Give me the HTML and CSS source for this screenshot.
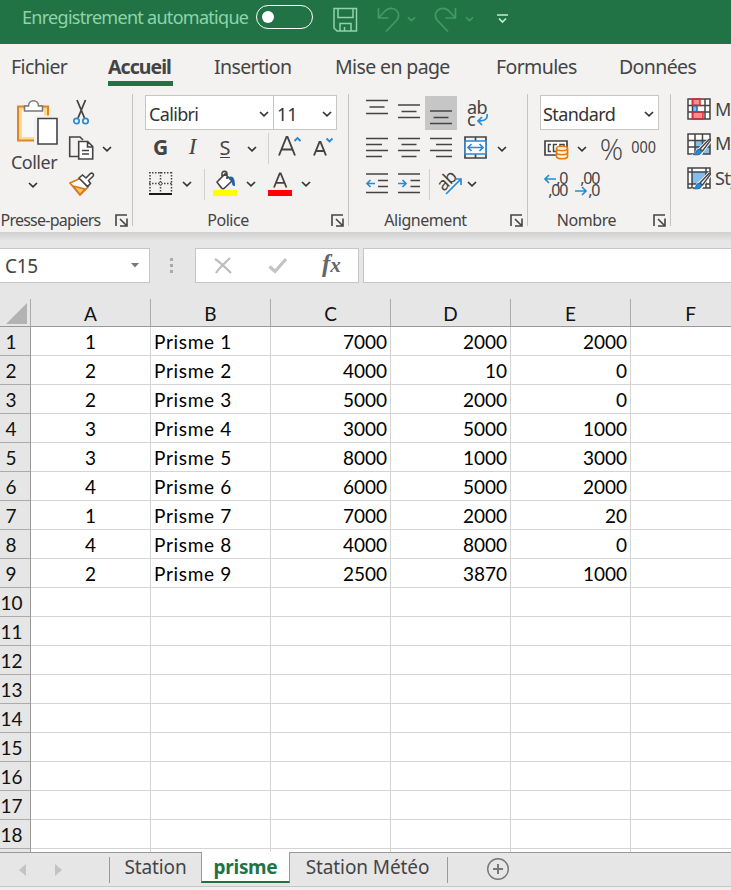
FILE: index.html
```html
<!doctype html>
<html lang="fr">
<head>
	<meta charset="utf-8">
	<title>Classeur</title>
	<link rel="stylesheet" href="styles.css">
</head>
<body>
<svg class="defs">
	<symbol id="chev" viewBox="0 0 10 6"><path d="M1 1l4 3.800L9 1" fill="none" stroke="currentColor" stroke-width="1.700"/></symbol>
	<symbol id="launch" viewBox="0 0 13 13"><path d="M1 12V1h11M5 5l6 6M12 4.500v7.500H5" fill="none" stroke="currentColor" stroke-width="1.600"/></symbol>
</svg>
<div class="wrap">
	<!--barre de titre-->
	<div class="titlebar">
		<span class="autosave">Enregistrement automatique</span>
		<span class="toggle"><i></i></span>
		<svg class="save" width="26" height="26" viewBox="0 0 26 26"><path d="M2 1.500h22.500v22.500H5l-3-3zM6 1.500v9h15v-9M8 24v-7.500h11V24M12.500 24v-4" fill="none" stroke="#8fd3ab" stroke-width="1.500"/></svg>
		<svg class="undo" width="24" height="26" viewBox="0 0 24 26"><path d="M1.500 1v10h10M1.500 11l6-6.500C11 .5 17 .5 20 4c2.500 3 2 7-.5 9.500L9 24.500" fill="none" stroke="#429a66" stroke-width="1.700"/></svg>
		<svg class="undo-chev" width="9" height="6"><use href="#chev"/></svg>
		<svg class="redo" width="24" height="26" viewBox="0 0 24 26"><path d="M22.500 1v10h-10M22.500 11l-6-6.500C13 .5 7 .5 4 4c-2.500 3-2 7 .5 9.500L15 24.500" fill="none" stroke="#429a66" stroke-width="1.700"/></svg>
		<svg class="redo-chev" width="9" height="6"><use href="#chev"/></svg>
		<svg class="more" width="12" height="12" viewBox="0 0 12 12"><path d="M0 2h11M2 5.500l3.500 3.500L9 5.500" fill="none" stroke="#c0efd2" stroke-width="1.700"/></svg>
	</div>
	<!--onglets-->
	<div class="tabs">
		<span>Fichier</span><span class="on"><b>Accueil</b></span><span>Insertion</span><span>Mise en page</span><span>Formules</span><span>Données</span>
	</div>
	<!--ruban-->
	<div class="ribbon">
		<div class="group clip">
			<div class="cols">
				<div class="paste">
					<svg width="66" height="56" viewBox="0 0 66 56">
						<path d="M18 11.500h30v34H18z" fill="#ffd98f" stroke="#e0842a" stroke-width="2"/>
						<path d="M22 15h22v27H22z" fill="#f8f8f7"/>
						<path d="M24.500 16v-5h4c0-7 10-7 10 0h4v5z" fill="#fff" stroke="#777" stroke-width="1.500"/>
						<path d="M35.500 22V49.800H50V22z" fill="#f3f2f1" stroke="#f3f2f1" stroke-width="3"/>
						<path d="M38 23.500h19v25.500H38z" fill="#fff" stroke="#444" stroke-width="1.600"/>
					</svg>
					<span>Coller</span>
					<svg class="chev" width="10" height="6"><use href="#chev"/></svg>
				</div>
				<div class="tools">
					<svg width="60" height="36" viewBox="0 0 60 36">
						<path d="M11 5l7.500 18M19.500 5l-7.500 18" fill="none" stroke="#444" stroke-width="1.800"/>
						<g fill="#f3f2f1" stroke="#2a8ad4" stroke-width="1.700"><circle cx="10.500" cy="26" r="2.700"/><circle cx="19.500" cy="26" r="2.700"/></g>
					</svg>
					<svg width="60" height="35" viewBox="0 0 60 35">
						<path d="M12 25.500H3.700V6H14l3 3" fill="none" stroke="#444" stroke-width="1.600"/>
						<path d="M12.700 10.500h9l5 5v12.500h-14zM21.500 10.500v5.500h5M16 19.500h7M16 23h7" fill="#fff" stroke="#444" stroke-width="1.600"/>
						<path d="M37 16l4 3.800 4-3.800" fill="none" stroke="#333" stroke-width="1.700"/>
					</svg>
					<svg width="60" height="36" viewBox="0 0 60 36">
						<path d="M4 17l10-4.500 8 8.500-8 8z" fill="#fff" stroke="#d8781f" stroke-width="1.600"/>
						<path d="M7 20l12 3-5 5.500z" fill="#ffc45c" stroke="#d8781f" stroke-width="1.400"/>
						<path d="M13 12l3.500-3 3.500 3L24.500 7.500c2-1 4 .8 2.500 2.800L22.500 14.500l2 3-3 3z" fill="#fff" stroke="#444" stroke-width="1.600"/>
					</svg>
				</div>
			</div>
			<div class="foot"><span>Presse-papiers</span><svg width="13" height="13"><use href="#launch"/></svg></div>
		</div>
		<div class="group font">
			<div class="row">
				<div class="combo name"><span>Calibri</span><svg width="10" height="6"><use href="#chev"/></svg></div>
				<div class="combo size"><span>11</span><svg width="10" height="6"><use href="#chev"/></svg></div>
			</div>
			<div class="row r2">
				<b class="g">G</b><i class="it">I</i><span class="s">S</span>
				<svg class="chev" width="10" height="6"><use href="#chev"/></svg>
				<em class="sep"></em>
				<svg width="32" height="35" viewBox="0 0 32 35"><path d="M5 24.500L12.500 6h1L21 24.500M8 18.500h10" fill="none" stroke="#444" stroke-width="1.900"/><path d="M20.500 10l3-3 3 3" fill="none" stroke="#2a8ad4" stroke-width="1.900"/></svg>
				<svg width="32" height="35" viewBox="0 0 32 35"><path d="M8 24.500l5.500-13.500h1L20 24.500M10 20h8" fill="none" stroke="#444" stroke-width="1.900"/><path d="M20.500 7.500l3 3 3-3" fill="none" stroke="#2a8ad4" stroke-width="1.900"/></svg>
			</div>
			<div class="row r3">
				<svg width="31" height="36" viewBox="0 0 31 36"><path d="M4 6.800h23M4 17.500h23M5 6v21M15.500 6v21M26.500 6v21" fill="none" stroke="#444" stroke-width="1.500" stroke-dasharray="1.500 1.500"/><circle cx="15.500" cy="17.500" r="1.500" fill="#fff" stroke="#444"/><path d="M4 28h23" stroke="#000" stroke-width="1.800"/></svg>
				<svg class="chev" width="10" height="6"><use href="#chev"/></svg>
				<em class="sep"></em>
				<svg width="27" height="36" viewBox="0 0 27 36"><path d="M7 16l8-8 7 7-7.500 7c-1 1-2 1-3 0zM12 12V8c0-4 5-3 5 0v5" fill="#fff" stroke="#444" stroke-width="1.600"/><path d="M18 11c5-2 7 1 7 9-3 0-3-2-3-5z" fill="#1b65b0"/><path d="M3 24h24v6H3z" fill="#ff0"/></svg>
				<svg class="chev" width="10" height="6"><use href="#chev"/></svg>
				<svg width="30" height="36" viewBox="0 0 30 36"><path d="M9 21.500L14.700 7.500h1L21.500 21.500M11 16.800h8.500" fill="none" stroke="#444" stroke-width="1.800"/><path d="M3 24h24v6H3z" fill="red"/></svg>
				<svg class="chev" width="10" height="6"><use href="#chev"/></svg>
			</div>
			<div class="foot"><span>Police</span><svg width="13" height="13"><use href="#launch"/></svg></div>
		</div>
		<div class="group align">
			<div class="row lines">
				<svg width="32" height="36" viewBox="0 0 32 36"><path d="M5 5.500h22M8.500 12h15M5 18.500h22"/></svg>
				<svg width="32" height="36" viewBox="0 0 32 36"><path d="M5 10h22M8.500 16.500h15M5 22.500h22"/></svg>
				<svg class="on" width="32" height="34" viewBox="0 1 32 34"><path d="M5 16h22M8.500 22.500h15M5 28.500h22"/></svg>
				<div class="wraptext"><span>ab</span><span>c<svg width="13" height="12" viewBox="0 0 13 12"><path d="M11 0c1 5-2 7-9 7M6 3L2 7l4 4" stroke="#2a8ad4"/></svg></span></div>
			</div>
			<div class="row r2 lines">
				<svg width="32" height="35" viewBox="0 0 32 35"><path d="M5 7.500h22M5 13.500h16M5 19.500h22M5 25.500h16"/></svg>
				<svg width="32" height="35" viewBox="0 0 32 35"><path d="M5 7.500h22M8.500 13.500h15M5 19.500h22M8.500 25.500h15"/></svg>
				<svg width="32" height="35" viewBox="0 0 32 35"><path d="M5 7.500h22M11 13.500h16M5 19.500h22M11 25.500h16"/></svg>
				<svg width="36" height="35" viewBox="0 0 36 35"><path d="M8 6h21v21H8zM18.500 6v4M18.500 23v4"/><path d="M8 10h21v13H8z" fill="#fff" stroke="#2a8ad4"/><path d="M11 16.500h15M14.500 13L11 16.500l3.500 3.500M22.500 13l3.500 3.500-3.500 3.500" stroke="#2a8ad4"/></svg>
				<svg class="chev" width="10" height="6"><use href="#chev"/></svg>
			</div>
			<div class="row r3 lines">
				<svg width="32" height="36" viewBox="0 0 32 36"><path d="M5 8h22M17 14.500h10M17 20.500h10M5 26.500h22"/><path d="M14 17.500H6M9.500 14L6 17.500 9.500 21" stroke="#2a8ad4"/></svg>
				<svg width="32" height="36" viewBox="0 0 32 36"><path d="M5 8h22M17.500 14.500H27M17.500 20.500H27M5 26.500h22"/><path d="M5 17.500h8M9.500 14l3.500 3.500L9.500 21" stroke="#2a8ad4"/></svg>
				<em class="sep"></em>
				<div class="orient"><span>ab</span><svg width="18" height="18" viewBox="0 0 18 18"><path d="M1 17L16 2M10 2h6v6" stroke="#2a8ad4"/></svg></div>
				<svg class="chev" width="10" height="6"><use href="#chev"/></svg>
			</div>
			<div class="foot"><span>Alignement</span><svg width="13" height="13"><use href="#launch"/></svg></div>
		</div>
		<div class="group number">
			<div class="row">
				<div class="combo std"><span>Standard</span><svg width="10" height="6"><use href="#chev"/></svg></div>
			</div>
			<div class="row r2">
				<svg width="32" height="35" viewBox="0 0 32 35"><path d="M5 10h22v14H5z" fill="#fff" stroke="#444" stroke-width="1.700"/><path d="M11 13.500H8.500v7H11M17 13.500h-3.500v7H17M20 17v-3.500h4V16" fill="none" stroke="#444" stroke-width="1.500"/><path d="M16.500 17.500c0-3 11-3 11 0v8c0 3-11 3-11 0z" fill="#fff4df" stroke="#e07b1c" stroke-width="1.700"/><path d="M16.500 17.500c0 3 11 3 11 0M16.500 21.500c0 3 11 3 11 0" fill="none" stroke="#e07b1c" stroke-width="1.600"/></svg>
				<svg class="chev" width="10" height="6"><use href="#chev"/></svg>
				<span class="pct">%</span><span class="ooo">000</span>
			</div>
			<div class="row r3">
				<div class="dec"><span><svg width="13" height="10" viewBox="0 0 13 10"><path d="M13 5H2M6 1L2 5l4 4"/></svg>,0</span><span>,00</span></div>
				<div class="dec"><span>,00</span><span><svg width="13" height="10" viewBox="0 0 13 10"><path d="M0 5h11M7 1l4 4-4 4"/></svg>,0</span></div>
			</div>
			<div class="foot"><span>Nombre</span><svg width="13" height="13"><use href="#launch"/></svg></div>
		</div>
		<div class="styles">
			<div>
				<svg width="24" height="24" viewBox="0 0 24 24"><path d="M1 1h22v20H1z" fill="#fff"/><path d="M5 1h8v6H5zM5 14h11v7H5z" fill="#ff8c8c"/><path d="M5 7h5v7H5z" fill="#83beec"/><path d="M1 1h22v20H1zM1 7.500h22M1 14h22M5.500 1v20M18 1v20" fill="none" stroke="#444" stroke-width="1.500"/><path d="M5.500 1H13v6.500H5.500zM5.500 14H16v7H5.500z" fill="none" stroke="#d92b36" stroke-width="1.500"/><path d="M5.500 7.500h4.500v6.500" fill="none" stroke="#1d70b8" stroke-width="1.500"/></svg>
				<span>Mise en forme</span>
			</div>
			<div>
				<svg width="24" height="24" viewBox="0 0 24 24"><path d="M1 1h22v20H1z" fill="#fff"/><path d="M8 7h15v14H8z" fill="#83beec"/><path d="M1 1h22v20H1zM1 7.500h22M1 14h22M8 1v20M15.500 1v20" fill="none" stroke="#444" stroke-width="1.500"/><path d="M7 22c3-1 1-5 5-6L22 6l2 2-8.500 11c-1 4-5 4-8.500 3z" fill="#f3f2f1" stroke="#f3f2f1" stroke-width="2"/><path d="M13 16L22 6.500c1-1 2 0 1.200 1.200L15.500 18z" fill="#fff" stroke="#444" stroke-width="1.400"/><path d="M6 21.500c4 0 2-5 6-5 4 0 4 7-6 5z" fill="#2a8ad4" stroke="#1763a8"/></svg>
				<span>Mettre sous forme</span>
			</div>
			<div>
				<svg width="24" height="24" viewBox="0 0 24 24"><path d="M1 1h22v20H1z" fill="#fff"/><path d="M5 5h14v12H5z" fill="#83beec"/><path d="M1 1h22v20H1zM1 5h22M5 1v20M19 1v20M1 17h22" fill="none" stroke="#444" stroke-width="1.500"/><path d="M7 22c3-1 1-5 5-6L22 6l2 2-8.500 11c-1 4-5 4-8.500 3z" fill="#f3f2f1" stroke="#f3f2f1" stroke-width="2"/><path d="M13 16L22 6.500c1-1 2 0 1.200 1.200L15.500 18z" fill="#fff" stroke="#444" stroke-width="1.400"/><path d="M6 21.500c4 0 2-5 6-5 4 0 4 7-6 5z" fill="#2a8ad4" stroke="#1763a8"/></svg>
				<span>Styles de cellules</span>
			</div>
		</div>
	</div>
	<!--barre de formule-->
	<div class="formula">
		<div class="cellname"><span>C15</span><svg width="8" height="5" viewBox="0 0 8 5"><path d="M0 0h8L4 4.500z" fill="#777"/></svg></div>
		<div class="dots"><i></i><i></i><i></i></div>
		<div class="fx">
			<svg width="18" height="18" viewBox="0 0 18 18"><path d="M1 2c5 3 11 9 16 14M16 1C11 6 5 11 2 16" fill="none" stroke="#bdbdbd" stroke-width="2.200"/></svg>
			<svg width="20" height="18" viewBox="0 0 20 18"><path d="M1.500 9.500l5.500 5L18 2" fill="none" stroke="#c3c3c3" stroke-width="3.200"/></svg>
			<span>f<small>x</small></span>
		</div>
		<div class="input"></div>
	</div>
	<!--feuille-->
	<div class="sheet">
		<table>
			<tr class="head"><th><svg width="21" height="21" viewBox="0 0 21 21"><path d="M21 0v21H0z" fill="#b3b3b3"/></svg></th><th>A</th><th>B</th><th>C</th><th>D</th><th>E</th><th>F</th></tr>
			<tr><th>1</th><td>1</td><td>Prisme 1</td><td>7000</td><td>2000</td><td>2000</td><td></td></tr>
			<tr><th>2</th><td>2</td><td>Prisme 2</td><td>4000</td><td>10</td><td>0</td><td></td></tr>
			<tr><th>3</th><td>2</td><td>Prisme 3</td><td>5000</td><td>2000</td><td>0</td><td></td></tr>
			<tr><th>4</th><td>3</td><td>Prisme 4</td><td>3000</td><td>5000</td><td>1000</td><td></td></tr>
			<tr><th>5</th><td>3</td><td>Prisme 5</td><td>8000</td><td>1000</td><td>3000</td><td></td></tr>
			<tr><th>6</th><td>4</td><td>Prisme 6</td><td>6000</td><td>5000</td><td>2000</td><td></td></tr>
			<tr><th>7</th><td>1</td><td>Prisme 7</td><td>7000</td><td>2000</td><td>20</td><td></td></tr>
			<tr><th>8</th><td>4</td><td>Prisme 8</td><td>4000</td><td>8000</td><td>0</td><td></td></tr>
			<tr><th>9</th><td>2</td><td>Prisme 9</td><td>2500</td><td>3870</td><td>1000</td><td></td></tr>
			<tr><th>10</th><td></td><td></td><td></td><td></td><td></td><td></td></tr>
			<tr><th>11</th><td></td><td></td><td></td><td></td><td></td><td></td></tr>
			<tr><th>12</th><td></td><td></td><td></td><td></td><td></td><td></td></tr>
			<tr><th>13</th><td></td><td></td><td></td><td></td><td></td><td></td></tr>
			<tr><th>14</th><td></td><td></td><td></td><td></td><td></td><td></td></tr>
			<tr><th>15</th><td></td><td></td><td></td><td></td><td></td><td></td></tr>
			<tr><th>16</th><td></td><td></td><td></td><td></td><td></td><td></td></tr>
			<tr><th>17</th><td></td><td></td><td></td><td></td><td></td><td></td></tr>
			<tr><th>18</th><td></td><td></td><td></td><td></td><td></td><td></td></tr>
			<tr><th></th><td></td><td></td><td></td><td></td><td></td><td></td></tr>
		</table>
	</div>
	<!--onglets des feuilles-->
	<div class="sheetbar">
		<div class="nav">
			<svg width="8" height="12" viewBox="0 0 8 12"><path d="M7 0v12L0 6z" fill="#c3c3c3"/></svg>
			<svg width="8" height="12" viewBox="0 0 8 12"><path d="M1 0v12l7-6z" fill="#c3c3c3"/></svg>
		</div>
		<div class="st">Station</div>
		<div class="st on">prisme</div>
		<div class="st meteo">Station Météo</div>
		<svg class="plus" width="24" height="24" viewBox="0 0 24 24"><path d="M12 7v10M7 12h10" stroke="#777" stroke-width="2"/><circle cx="12" cy="12" r="10.300" fill="none" stroke="#777" stroke-width="1.400"/></svg>
	</div>
</div>
</body>
</html>
```
FILE: styles.css
```css
*{margin:0;padding:0;box-sizing:border-box;}
body{font-family:"Noto Sans","Open Sans",sans-serif;font-size:16px;color:#444;background:#f0f0f0;overflow:hidden;}
svg{display:block;flex:none;}
.defs{width:0;height:0;position:absolute;}
.wrap{width:731px;height:890px;overflow:hidden;white-space:nowrap;}

.titlebar{height:44px;background:#217346;display:flex;align-items:flex-start;padding-left:22px;color:#429a66;}
.autosave{width:234px;font-size:18px;line-height:35px;letter-spacing:-.71px;color:#8fd3ab;}
.toggle{width:57px;height:24px;margin-top:5px;border:1.5px solid #fff;border-radius:12px;padding:5px;}
.toggle i{display:block;width:12px;height:12px;border-radius:50%;background:#fff;}
.save{margin:7px 0 0 19px;}
.undo{margin:7px 0 0 19px;}
.undo-chev{margin:16px 0 0 6px;}
.redo{margin:7px 0 0 17px;}
.redo-chev{margin:16px 0 0 8px;}
.more{margin:13px 0 0 23px;}

.tabs{height:46px;background:#f3f2f1;display:grid;grid-template-columns:97px 106px 121px 161px 123px 100px;padding-left:11px;font-size:19.5px;line-height:46px;letter-spacing:-.62px;}
.tabs b{display:block;width:65px;height:42px;border-bottom:5px solid #217346;letter-spacing:-.95px;}

.ribbon{height:142px;background:#f3f2f1;display:flex;}
.group{height:142px;padding:5px 0 0 12px;background:linear-gradient(#c4c4c4,#c4c4c4) no-repeat right 4px/1px 132px;}
.clip{width:133px;}
.group.clip{padding-left:0;}
.font{width:216px;}
.align{width:179px;}
.number{width:143px;}
.chev,.combo svg{color:#333;}
.cols{display:flex;height:107px;}
.paste{width:66px;display:flex;flex-direction:column;align-items:center;font-size:18px;line-height:22px;}
.paste span{letter-spacing:-.5px;margin-left:2px;}
.paste .chev{margin-top:9px;}
.row{display:flex;height:36px;align-items:center;}
.font .row:first-child,.number .row:first-child{align-items:flex-start;}
.r2{height:35px;display:grid;}
.r3{display:grid;}
.r2>*,.r3>*{justify-self:center;}
.font .r2{grid-template-columns:31px 33px 32px 21px 12px 32px 32px;}
.font .r3{grid-template-columns:31px 22px 12px 27px 28px 30px 22px;}
.align .r2{grid-template-columns:32px 32px 32px 36px 18px;}
.align .r3{grid-template-columns:32px 32px 9px 30px 16px;}
.number .r2{grid-template-columns:32px 20px 38px 28px;}
.number .r3{grid-template-columns:30px 34px;}
.combo{height:35px;border:1px solid #c6c6c6;background:#fff;display:flex;align-items:center;justify-content:space-between;padding:2px 4px 0 3px;font-size:18px;color:#333;}
.name{width:129px;letter-spacing:-.65px;}
.size{width:64px;margin-left:-1px;}
.std{width:119px;letter-spacing:-.6px;padding-left:2px;}
.g{font-size:21px;line-height:30px;margin-top:-3px;}
.it{font-family:"Liberation Serif",serif;font-size:23px;line-height:30px;margin-top:-3px;}
.s{font-size:20px;line-height:18px;border-bottom:1.5px solid #444;}
.sep{width:1px;height:31px;background:#d0d0d0;}
.lines svg:not(.chev){fill:none;stroke:#444;stroke-width:1.7;}
.lines .on{background:#c6c6c6;}
.wraptext{width:42px;padding-left:10px;font-size:18px;line-height:12px;letter-spacing:-.7px;}
.wraptext span{display:flex;align-items:flex-start;}
.wraptext svg{margin:1px 0 0 1px;}
.orient{width:26px;height:26px;position:relative;}
.orient span{position:absolute;left:0;top:-1px;font-size:18px;line-height:20px;letter-spacing:-.7px;transform:rotate(-45deg);}
.orient svg{position:absolute;left:9px;top:6px;}
.pct{font:29px/35px "Open Sans","Noto Sans",sans-serif;font-weight:300;letter-spacing:-1px;}
.ooo{font-size:16px;margin-top:-3px;transform:scaleX(.9);}
.dec{width:24px;font-size:16px;line-height:12px;letter-spacing:-1.3px;}
.dec span{display:flex;justify-content:flex-end;}
.dec svg{fill:none;stroke:#2a8ad4;stroke-width:1.7;margin-top:2px;}
.foot{height:30px;display:flex;align-items:center;padding-right:5px;font-size:16px;line-height:30px;letter-spacing:-.45px;}
.foot span{flex:1;text-align:center;padding-top:5px;}
.foot svg{margin-top:6px;}
.clip .foot span{margin-left:-14px;letter-spacing:-.75px;}
.font .foot span{padding-right:20px;}
.align .foot span{padding-right:20px;}
.number .foot span{padding-right:20px;}
.styles{width:60px;padding:3px 0 0 16px;overflow:hidden;font-size:18px;}
.styles div{height:34.5px;display:flex;align-items:center;gap:4px;}
.styles span{margin-top:-3px;letter-spacing:-.6px;}

.formula{height:67px;background:linear-gradient(#cfcfcf,#e6e6e6 9px);display:flex;padding-top:16px;}
.formula>div{height:35px;}
.cellname,.fx,.input{border:1px solid #c6c6c6;background:#fff;}
.cellname{width:150px;border-left:0;display:flex;align-items:center;justify-content:space-between;padding:0 10px 0 5px;font-size:19px;letter-spacing:-.3px;}
.dots{width:45px;display:flex;flex-direction:column;align-items:center;justify-content:center;gap:3px;padding-right:2px;}
.dots i{width:3px;height:3px;background:#aaa;}
.fx{width:164px;display:flex;align-items:center;padding-left:18px;}
.fx svg+svg{margin-left:36px;}
.fx span{margin:-3px 0 0 34px;font:italic bold 25px/30px "Liberation Serif",serif;color:#666;}
.fx small{font-size:21px;}
.input{margin-left:4px;flex:1;border-right:0;}

.sheet{height:553px;background:#fff;overflow:hidden;font-family:Lato,"Noto Sans",sans-serif;}
table{width:751px;table-layout:fixed;border-collapse:separate;border-spacing:0;font-size:19px;line-height:28px;color:#000;}
th,td{height:29px;border-right:1px solid #d4d4d4;border-bottom:1px solid #d4d4d4;padding:2px 3px 0;line-height:26px;}
th{width:120px;font-weight:normal;background:#e6e6e6;color:#111;}
th:first-child{width:31px;border-color:#ababab;border-right-color:#999;padding:2px 8px 0 0;text-align:center;}
tr:nth-child(n+11) th{padding-right:7px;}
.head th,.head th:first-child{height:28px;border-bottom-color:#999;border-right-color:#ababab;padding:2px 0 0;line-height:25px;}
.head svg{margin:0 0 0 6px;}
td:nth-child(2){text-align:center;}
td:nth-child(3){letter-spacing:.7px;}
td:nth-child(n+4){text-align:right;}

.sheetbar{height:35px;background:#e6e6e6;border-top:1px solid #999;border-bottom:1px solid #c6c6c6;display:flex;font-size:19px;line-height:28px;}
.nav{width:110px;border-right:1px solid #999;height:26px;margin-top:4px;display:flex;align-items:center;padding-left:19px;gap:27px;}
.st{width:91px;text-align:center;letter-spacing:-.1px;}
.st.on{width:89px;height:31px;margin-top:-1px;line-height:30px;background:#fff;border:1px solid #999;border-top:0;border-bottom:2px solid #217346;color:#217346;font-weight:bold;letter-spacing:-.3px;}
.st.meteo{width:158px;padding-right:3px;background:linear-gradient(#999,#999) no-repeat right 4px/1px 26px;}
.plus{margin:4px 0 0 38px;}
```
